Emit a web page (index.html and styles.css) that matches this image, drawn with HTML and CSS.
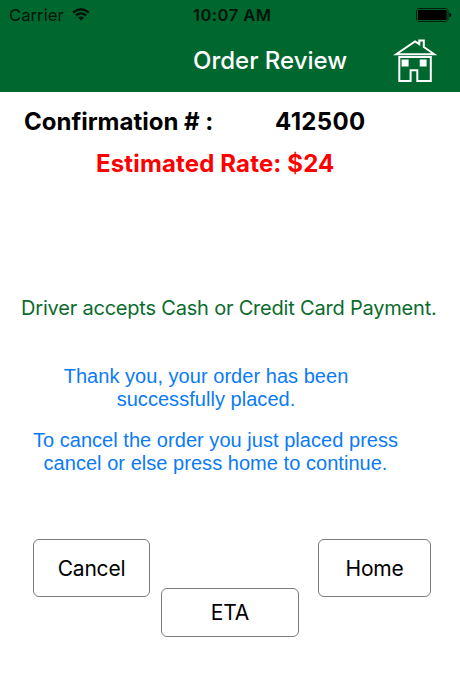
FILE: index.html
```
<!DOCTYPE html>
<html lang="en">

<head>
    <meta charset="UTF-8">
    <meta name="viewport" content="width=device-width, initial-scale=1.0">
    <title>Order Review</title>
    <link rel="stylesheet" href="styles.css">
</head>

<body>
    <header>
        <div class="status-bar">
            <div class="carrier">
                <span>Carrier</span>
                <svg class="wifi" viewBox="0 0 18 13" width="18" height="13">
                    <path d="M1.2 4.7Q9-2.2 16.8 4.7" />
                    <path d="M3.9 7.5Q9 3 14.1 7.5" />
                    <path class="dot" d="M9 12.6L6 9.7Q9 7.3 12 9.7Z" />
                </svg>
            </div>
            <span class="clock">10:07 AM</span>
            <svg class="battery" viewBox="0 0 36 14" width="36" height="14">
                <rect class="case" x="0.6" y="0.6" width="31.4" height="12.8" rx="2.2" />
                <rect x="2" y="2" width="28.6" height="10" rx="0.8" />
                <path d="M33.3 4.7Q35.3 5.2 35.3 7T33.3 9.3Z" />
            </svg>
        </div>
        <div class="nav-bar">
            <h1>Order Review</h1>
            <svg class="home-icon" viewBox="0 0 44 44" width="44" height="44">
                <path d="M3.2 15.3L22 2.4L26.3 5.2V1.4H30.8V8L41.4 15.3Z" />
                <path d="M6.3 17.9H37.8V42.1H24.3V31.2H17.6V42.1H6.3Z" />
                <path class="window" d="M8.6 20.6H15.6V27.6H8.6ZM26.7 20.6H33.6V27.6H26.7Z" />
            </svg>
        </div>
    </header>

    <main>
        <div class="confirmation">
            <span>Confirmation # :</span>
            <span class="number">412500</span>
        </div>
        <div class="rate">Estimated Rate: $24</div>
        <p class="payment">Driver accepts Cash or Credit Card Payment.</p>
        <div class="message">
            <p>Thank you, your order has been<br>successfully placed.</p>
            <p>To cancel the order you just placed press<br>cancel or else press home to continue.</p>
        </div>
        <div class="buttons">
            <button>Cancel</button>
            <button class="eta">ETA</button>
            <button class="home">Home</button>
        </div>
    </main>
</body>

</html>
```
FILE: styles.css
```
* {
    box-sizing: border-box;
}

body {
    margin: 0;
    font-family: Inter, sans-serif;
    background-color: #fff;
    color: #000;
}

header {
    height: 92px;
    background-color: #00672f;
}

.status-bar {
    height: 30px;
    padding: 0 8px 0 9px;
    display: grid;
    grid-template-columns: 184px auto 1fr;
    align-items: center;
    font-size: 16.5px;
    color: #001407;
}

.carrier {
    display: flex;
    align-items: center;
    gap: 8px;
    letter-spacing: 0.1px;
}

.wifi {
    margin-top: -2px;
    fill: none;
    stroke: #001407;
    stroke-width: 2.4;
}

.wifi .dot {
    fill: #001407;
    stroke: none;
}

.clock {
    font-weight: 600;
    letter-spacing: 0.5px;
}

.battery {
    justify-self: end;
}

.battery .case {
    fill: none;
    stroke: #001b0a;
    stroke-width: 1;
}

.nav-bar {
    height: 62px;
    padding: 0 23px 0 193px;
    display: flex;
    align-items: center;
    justify-content: space-between;
}

h1 {
    margin: -2px 0 0;
    font-size: 24px;
    font-weight: 500;
    color: #fff;
    white-space: nowrap;
}

.home-icon {
    fill: none;
    stroke: #fff;
    stroke-width: 2;
}

.home-icon .window {
    fill: #fff;
    stroke: none;
}

.confirmation {
    display: flex;
    padding: 15px 0 0 24px;
    font-size: 24px;
    font-weight: 700;
    line-height: 30px;
    white-space: nowrap;
}

.confirmation span:first-child {
    width: 251px;
}

.confirmation .number {
    letter-spacing: 0.35px;
}

.rate {
    margin-top: 12px;
    padding-left: 96px;
    font-size: 24px;
    font-weight: 700;
    line-height: 30px;
    letter-spacing: 0.15px;
    color: #fe0000;
}

.payment {
    margin: 116px 0 0 21px;
    font-size: 20px;
    line-height: 26px;
    letter-spacing: -0.2px;
    color: #0b6b2e;
    white-space: nowrap;
}

.message {
    width: 412px;
    margin-top: 44px;
    font-family: "Liberation Sans", sans-serif;
    font-size: 20px;
    line-height: 23px;
    letter-spacing: 0.04px;
    text-align: center;
    color: #0b7bf5;
}

.message p {
    margin: 0 0 18px;
}

.message p + p {
    padding-left: 19px;
}

.buttons {
    display: flex;
    align-items: flex-start;
    margin-top: 64px;
    padding-left: 33px;
}

button {
    width: 117px;
    height: 58px;
    padding: 0;
    border: 1px solid #7c7c7c;
    border-radius: 6px;
    background-color: #fff;
    font-family: inherit;
    font-size: 21px;
    letter-spacing: -0.2px;
    color: #000;
}

.buttons .eta {
    width: 138px;
    height: 49px;
    margin: 49px 19px 0 11px;
}

.buttons .home {
    width: 113px;
}
```
